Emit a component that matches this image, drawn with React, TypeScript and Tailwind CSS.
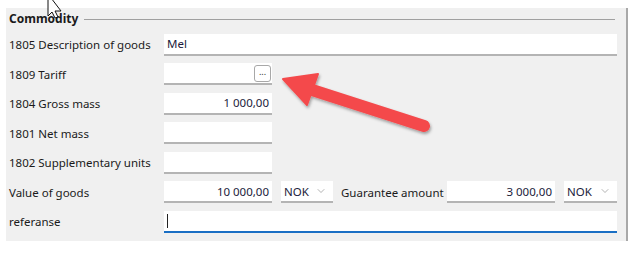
import { ChevronDown } from 'lucide-react';

const labelCls = 'w-[155px] shrink-0 text-[11.5px] text-[#1a1a1a] whitespace-nowrap';
const inputCls =
  'h-[22px] bg-white border-b-2 border-[#b4b4b4] px-[3px] flex items-center text-[11.5px] text-[#1c1c3c]';

function Field({ value, right, className }: { value?: string; right?: boolean; className: string }) {
  return (
    <div className={`${inputCls} ${right ? 'justify-end' : ''} ${className}`}>
      <span>{value}</span>
    </div>
  );
}

function CurrencySelect({ className }: { className: string }) {
  return (
    <div className={`${inputCls} justify-between pr-[6px] ${className}`}>
      <span>NOK</span>
      <ChevronDown className="h-3 w-3 text-[#8a8a8a]" strokeWidth={1.3} />
    </div>
  );
}

export default function App() {
  return (
    <div className="relative w-[643px] h-[258px] bg-white overflow-hidden" style={{ fontFamily: '"Noto Sans", sans-serif' }}>
      <div className="pt-[8px] pl-[6px] flex">
        <div className="w-[620px] h-[233px] bg-[#f0f0f0] pl-[3px] pr-[9px]">
          {/* Header */}
          <div className="flex items-center h-[21px] pt-[1px] mb-[1px]">
            <span className="text-[12px] font-bold text-[#1a1a1a]">Commodity</span>
            <div className="flex-1 h-px bg-[#a0a0a0] ml-[6px] mr-[2px]" />
          </div>

          <div className="flex flex-col">
            <div className="flex items-center h-[29.5px]">
              <span className={labelCls}>1805 Description of goods</span>
              <Field value="Mel" className="flex-1" />
            </div>
            <div className="flex items-center h-[29.5px]">
              <span className={labelCls}>1809 Tariff</span>
              <div className={`${inputCls} w-[108px] justify-end pr-[1px]`}>
                <div className="h-[17px] w-[17px] rounded-[3px] border border-[#a8a8a8] bg-white flex items-center justify-center text-[9px] leading-none text-[#333] pb-[3px]">
                  ...
                </div>
              </div>
            </div>
            <div className="flex items-center h-[29.5px]">
              <span className={labelCls}>1804 Gross mass</span>
              <Field value="1 000,00" right className="w-[108px]" />
            </div>
            <div className="flex items-center h-[29.5px]">
              <span className={labelCls}>1801 Net mass</span>
              <Field className="w-[108px]" />
            </div>
            <div className="flex items-center h-[29.5px]">
              <span className={labelCls}>1802 Supplementary units</span>
              <Field className="w-[108px]" />
            </div>
            <div className="flex items-center h-[29.5px]">
              <span className={labelCls}>Value of goods</span>
              <Field value="10 000,00" right className="w-[108px]" />
              <CurrencySelect className="w-[52px] ml-[9px]" />
              <span className="text-[11.5px] text-[#1a1a1a] ml-[8px] w-[106px] whitespace-nowrap">Guarantee amount</span>
              <Field value="3 000,00" right className="w-[108px]" />
              <CurrencySelect className="w-[53px] ml-[9px]" />
            </div>
            <div className="flex items-center h-[29.5px]">
              <span className={labelCls}>referanse</span>
              <div className="h-[22px] flex-1 bg-white border-b-2 border-[#1a6fc4] flex items-center pl-[3px]">
                <div className="w-px h-[14px] bg-[#222]" />
              </div>
            </div>
          </div>
        </div>
        <div className="w-[2px] h-[233px] bg-[#a8a8a8]" />
      </div>

      {/* Callout arrow */}
      <svg className="absolute inset-0 pointer-events-none" width="643" height="258" viewBox="0 0 643 258">
        <defs>
          <filter id="sh" x="-20%" y="-20%" width="140%" height="140%">
            <feDropShadow dx="1" dy="2" stdDeviation="1.8" floodColor="#000" floodOpacity="0.35" />
          </filter>
        </defs>
        <g filter="url(#sh)" fill="#f44a4c" stroke="#f44a4c">
          <line x1="309" y1="89" x2="424" y2="126" strokeWidth="12" strokeLinecap="round" />
          <polygon points="283,79 318,74 307,105" strokeWidth="2" strokeLinejoin="round" />
        </g>
      </svg>

      {/* Mouse pointer */}
      <svg className="absolute left-0 top-0 pointer-events-none" width="80" height="20" viewBox="0 0 80 20">
        <polygon points="48,-6 48,16 52,12 55,18 58,17 55,11 61,11" fill="white" stroke="#111" strokeWidth="1" />
      </svg>
    </div>
  );
}
